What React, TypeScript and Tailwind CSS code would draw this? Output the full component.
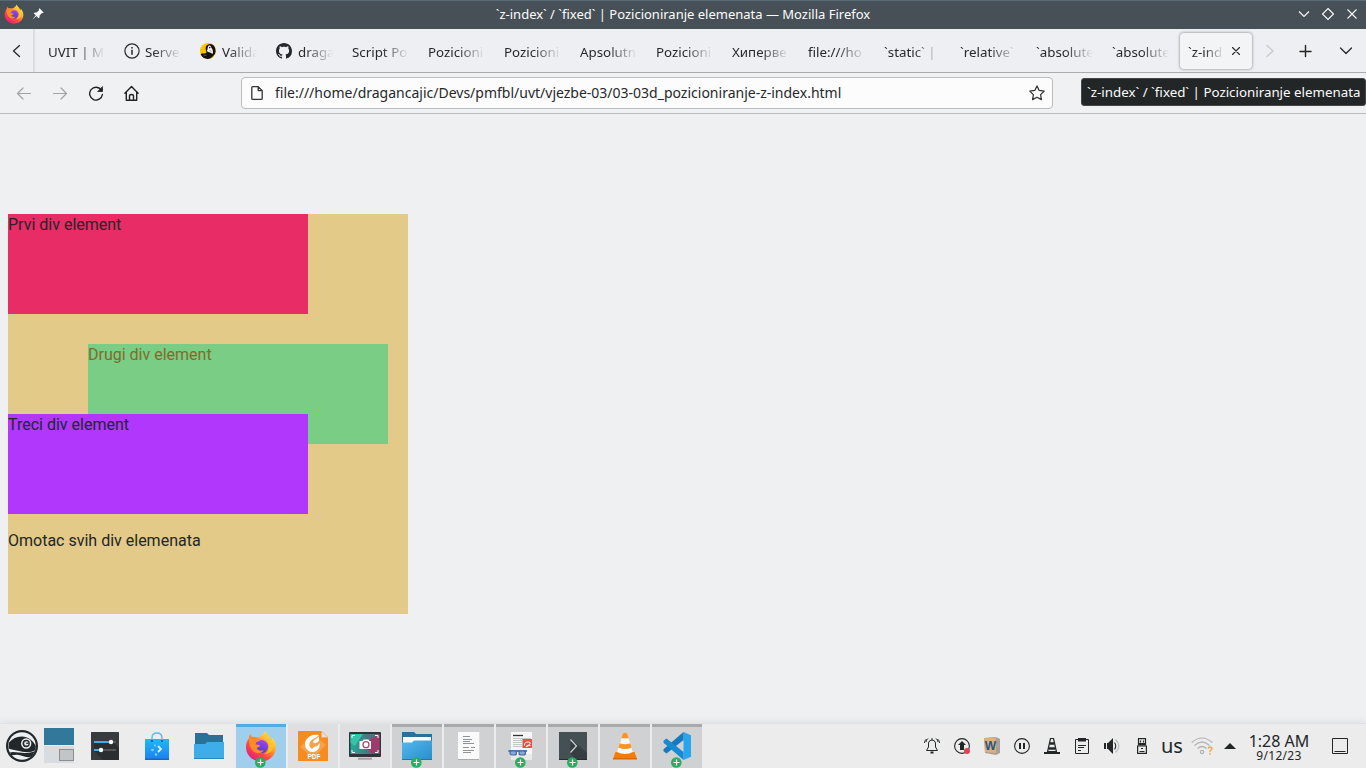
import React from "react";

type Tab = { title: string; icon?: "info" | "validator" | "github" };

const tabs: Tab[] = [
  { title: "UVIT | M" },
  { title: "Serve", icon: "info" },
  { title: "Valida", icon: "validator" },
  { title: "draga", icon: "github" },
  { title: "Script Po" },
  { title: "Pozicioni" },
  { title: "Pozicioni" },
  { title: "Apsolutn" },
  { title: "Pozicioni" },
  { title: "Хиперве" },
  { title: "file:///ho" },
  { title: "`static` |" },
  { title: "`relative`" },
  { title: "`absolute" },
  { title: "`absolute" },
];

function FirefoxLogo({ size }: { size: number }) {
  return (
    <svg width={size} height={size} viewBox="0 0 32 32" className="shrink-0">
      <defs>
        <linearGradient id="ffBody" x1="0.85" y1="0.1" x2="0.2" y2="0.95">
          <stop offset="0" stopColor="#fff04a" />
          <stop offset="0.35" stopColor="#ffa42a" />
          <stop offset="0.65" stopColor="#ff4c43" />
          <stop offset="1" stopColor="#e31b7c" />
        </linearGradient>
        <linearGradient id="ffGlobe" x1="0.7" y1="0" x2="0.3" y2="1">
          <stop offset="0" stopColor="#a145f7" />
          <stop offset="1" stopColor="#4a3cc0" />
        </linearGradient>
      </defs>
      <path
        d="M20.500 0.800C21 3.500 23.200 5 25 7.500c.8 1.100 1 2 1.300 2.900.8-.9.900-2 .700-2.800 2.700 3 4.200 6.500 4 10.400C30.700 25.600 24.200 31.500 16 31.500S1 25.300 1 17.300c0-3.200 1-6.200 2.900-8.700.1-1.800.7-3.300 1.700-4.300.3 1.200.8 2 1.600 2.600 1.500-.4 3-.3 4.300.2 1.700.1 3.200-.2 4.500-1.200 1-1 3.500-2.900 4.500-5.100Z"
        fill="url(#ffBody)"
      />
      <circle cx="16.500" cy="16.500" r="6.600" fill="url(#ffGlobe)" />
      <path
        d="M3.900 9c2.600-1.800 5.600-1.900 8-.6 1.200.6 2.300.6 3.600.5-.5 2-2.700 2.600-4.100 3.300-.7.500-.5 1.700-.6 2.500 1.600-.6 3.300.2 4.600 1.100-1 1.200-2.500 1.300-3.700 2.200 1 2.700 4.500 3.300 7 2.100-1.600 3.300-5.800 4-8.900 2.200C6.200 20.400 3.700 15 3.900 9Z"
        fill="#ff8a29"
      />
      <path
        d="M18.600 7.200c3.400 1.800 5.500 4.800 5.600 8.500.1 4-2 7-5.400 8.700 5.300-.4 9-3.400 9.800-8.100.5-3.500-1-6-3.100-8-1.600-1.500-3.200-3-5-6.200-.8 1.800-1.600 3.500-1.900 5.100Z"
        fill="#ffc72f"
        opacity="0.85"
      />
    </svg>
  );
}

function TabIcon({ kind }: { kind: "info" | "validator" | "github" }) {
  if (kind === "info")
    return (
      <svg width="16" height="16" viewBox="0 0 16 16" className="mr-[5px] shrink-0">
        <circle cx="8" cy="8" r="7.100" fill="none" stroke="#26292c" strokeWidth="1.200" />
        <path d="M8 6.800v5M8 3.900v1.500" stroke="#26292c" strokeWidth="1.500" />
      </svg>
    );
  if (kind === "validator")
    return (
      <svg width="16" height="16" viewBox="0 0 16 16" className="mr-[6px] shrink-0">
        <circle cx="8" cy="8" r="8" fill="#fdc300" />
        <path d="M0.600 11.300C2 10 4 10.700 5.500 10.300 8 9.500 4.500 7 6 3.400 7.500.2 13-.2 14.700 4c1.500 4 .8 6.500-.9 8.300C10.500 17.500 3 17 .6 11.300Z" fill="#111" />
        <path d="M8.400 3c1.700-1.200 3 .3 2.900 1.800 1.600 1.500 2 3.500 1.500 6-1.600-.2-2-1.300-3.800-1.500L6.500 8C8 7.500 7.200 4.400 8.400 3Z" fill="#f5f5f0" />
        <circle cx="9.800" cy="4.600" r=".8" fill="#111" />
        <path d="M3.500 12.200h3M9.800 7l1.800 2" stroke="#777" strokeWidth=".7" />
      </svg>
    );
  return (
    <svg width="16" height="16" viewBox="0 0 16 16" className="mr-[6px] shrink-0" fill="#24292f">
      <path d="M8 0C3.580 0 0 3.580 0 8c0 3.540 2.290 6.530 5.470 7.590.4.070.55-.17.55-.38 0-.19-.01-.82-.01-1.490-2.010.37-2.530-.49-2.690-.94-.09-.23-.48-.94-.82-1.130-.28-.15-.68-.52-.01-.53.63-.01 1.080.58 1.230.82.72 1.210 1.870.87 2.330.66.07-.52.28-.87.51-1.070-1.780-.2-3.640-.89-3.640-3.950 0-.87.31-1.590.82-2.150-.08-.2-.36-1.020.08-2.120 0 0 .67-.21 2.200.82.64-.18 1.320-.27 2-.27s1.360.09 2 .27c1.530-1.040 2.200-.82 2.200-.82.44 1.100.16 1.920.08 2.120.51.56.82 1.270.82 2.150 0 3.070-1.870 3.750-3.650 3.950.29.25.54.73.54 1.480 0 1.070-.01 1.930-.01 2.200 0 .21.15.46.55.38A8.010 8.010 0 0 0 16 8c0-4.420-3.580-8-8-8Z" />
    </svg>
  );
}

function TitleBar() {
  return (
    <header className="flex h-[29px] shrink-0 items-center border-t border-[#586974] bg-[#475057] text-[#fcfcfc]">
      <div className="flex w-[100px] items-center pb-[2px] pl-1">
        <FirefoxLogo size={20} />
        <svg width="12" height="12" viewBox="0 0 12 12" className="ml-[8px] self-center">
          <path d="M7.500 0.300 11.700 4.500 10.600 5.300 10 4.900 7.500 7.400 7.500 9.300 6.500 10.200 4.500 8 .3 11.700 3.800 7.300 1.800 5.400 2.800 4.500 4.700 4.500 7.200 2 6.700 1.300Z" fill="#fcfcfc" />
        </svg>
      </div>
      <h1 className="flex-1 pb-[3px] text-center text-[13px] leading-[24px]">`z-index` / `fixed` | Pozicioniranje elemenata — Mozilla Firefox</h1>
      <div className="flex w-[100px] justify-end gap-2 pb-[2px] pr-1.5">
        <svg width="16" height="16" viewBox="0 0 16 16" fill="none" stroke="#fcfcfc" strokeWidth="1.100"><path d="M3 5.500l5 5 5-5" /></svg>
        <svg width="16" height="16" viewBox="0 0 16 16" fill="none" stroke="#fcfcfc" strokeWidth="1.100"><path d="M8 2.500 13.500 8 8 13.500 2.500 8Z" /></svg>
        <svg width="16" height="16" viewBox="0 0 16 16" fill="none" stroke="#fcfcfc" strokeWidth="1.100"><path d="M3.500 3.500l9 9m0-9l-9 9" /></svg>
      </div>
    </header>
  );
}

function TabStrip() {
  return (
    <div className="flex h-[44px] shrink-0 items-center border-b border-[#a9abad] bg-[#eeeff2] text-[13.330px] text-[#26292c]">
      <div className="flex h-full w-[33px] items-center justify-center">
        <svg width="16" height="16" viewBox="0 0 16 16" fill="none" stroke="#26292c" strokeWidth="1.300" strokeLinecap="round" strokeLinejoin="round"><path d="M10.500 2.500 4.500 8l6 5.500" /></svg>
      </div>
      <div className="h-full w-[5px] bg-linear-to-r from-[#d4d5d8] to-[#eeeff2] to-60%" />
      {tabs.map((t, i) => (
        <div key={i} className="flex w-[76px] shrink-0 items-center pl-[10px] pr-[9px] pt-px">
          {t.icon && <TabIcon kind={t.icon} />}
          <span className="min-w-0 flex-1 overflow-hidden whitespace-nowrap pt-[2px] leading-5 [mask-image:linear-gradient(to_left,transparent,black_28px)]">{t.title}</span>
        </div>
      ))}
      <div className="mx-0.5 flex h-[36px] w-[72px] shrink-0 items-center rounded-[4px] bg-[#f3f4f6] pl-2 pr-2 shadow-[0_0_3px_rgba(0,0,0,0.5)]">
        <span className="w-[36px] overflow-hidden whitespace-nowrap pt-[2px] leading-5 [mask-image:linear-gradient(to_left,transparent,black_20px)]">`z-ind</span>
        <svg width="16" height="16" viewBox="0 0 16 16" className="ml-[4px] shrink-0" stroke="#26292c" strokeWidth="1.100" strokeLinecap="round"><path d="M4.500 4.500l7 7m0-7l-7 7" /></svg>
      </div>
      <div className="flex flex-1 items-center pl-[8px]">
        <svg width="16" height="16" viewBox="0 0 16 16" fill="none" stroke="#c8c9cc" strokeWidth="1.300" strokeLinecap="round" strokeLinejoin="round"><path d="M5 2.500 11 8l-6 5.500" /></svg>
        <svg width="16" height="16" viewBox="0 0 16 16" fill="none" stroke="#222" strokeWidth="1.400" strokeLinecap="round" className="ml-[19px]"><path d="M8.500 2.500v11M3 8.500h11" /></svg>
        <svg width="16" height="16" viewBox="0 0 16 16" fill="none" stroke="#26292c" strokeWidth="1.300" strokeLinecap="round" strokeLinejoin="round" className="ml-[25px]"><path d="M2.500 5 8 10.500 13.500 5" /></svg>
      </div>
    </div>
  );
}

function NavBar() {
  return (
    <div className="flex h-[41px] shrink-0 items-center border-b border-[#bcbdc0] bg-[#f0f1f3] text-[#26292c]">
      <div className="flex w-[241px] gap-5 pl-4">
        <svg width="16" height="16" viewBox="0 0 16 16" fill="none" stroke="#a2a3a6" strokeWidth="1.200" strokeLinecap="round" strokeLinejoin="round"><path d="M14.500 8.500H1.500M7 3 1.500 8.500 7 14" /></svg>
        <svg width="16" height="16" viewBox="0 0 16 16" fill="none" stroke="#a2a3a6" strokeWidth="1.200" strokeLinecap="round" strokeLinejoin="round"><path d="M1.500 8.500h13M9 3 14.500 8.500 9 14" /></svg>
        <svg width="16" height="16" viewBox="0 0 16 16" fill="none" stroke="#222" strokeWidth="1.400" strokeLinecap="round"><path d="M13.300 5A6.400 6.400 0 1 0 14.400 9.500" /><path d="M14.500 2v4.500H10Z" fill="#222" strokeWidth=".8" strokeLinejoin="round" /></svg>
        <svg width="16" height="16" viewBox="0 0 16 16" fill="none" stroke="#222" strokeWidth="1.400" strokeLinecap="round" strokeLinejoin="round"><path d="M.9 8.200 7.500 1.500l6.600 6.700M2.300 7v8.200h10.400V7M5.500 15V11Q5.500 9.500 7.500 9.500T9.500 11V15" /></svg>
      </div>
      <div className="flex h-[32px] w-[812px] items-center rounded-[4px] border border-[#babcbe] bg-[#fcfcfc] pl-[7px] pr-[7px]">
        <svg width="16" height="16" viewBox="0 0 16 16" fill="none" stroke="#333" strokeWidth="1.300" strokeLinejoin="round"><path d="M3.800 1.600h5.400l4 4v7.800q0 1-1 1H3.800q-1 0-1-1V2.600q0-1 1-1ZM9.200 1.600v4h4" /></svg>
        <span className="ml-[10px] flex-1 whitespace-nowrap text-[14px] leading-5">file:///home/dragancajic/Devs/pmfbl/uvt/vjezbe-03/03-03d_pozicioniranje-z-index.html</span>
        <svg width="16" height="16" viewBox="0 0 16 16" fill="none" stroke="#333" strokeWidth="1.250" strokeLinejoin="round"><path d="m8 .9 2.200 4.500 5 .7-3.600 3.500.8 5L8 12.300l-4.400 2.300.8-5L.8 6.100l5-.7Z" /></svg>
      </div>
      <div className="-mt-[2px] ml-[28px] flex h-[28px] flex-1 items-center whitespace-nowrap rounded-[3px] border border-[#45484a] bg-[#232627] pl-[5px] pt-[2px] text-[13.330px] text-[#fcfcfc]">`z-index` / `fixed` | Pozicioniranje elemenata</div>
    </div>
  );
}

function Page() {
  return (
    <main className="min-h-0 flex-1 overflow-hidden bg-[#eff0f2] pl-2 pt-[100px] font-[Roboto,sans-serif] text-base leading-[21px] text-[#232627]">
      <div className="h-[400px] w-[400px] bg-[#e3ca88]">
        <div className="h-[100px] w-[300px] bg-[#e72c66]">Prvi div element</div>
        <div className="ml-[80px] mt-[30px] h-[100px] w-[300px] bg-[#7acd85] text-[#7f6c2c]">Drugi div element</div>
        <div className="relative -mt-[30px] h-[100px] w-[300px] bg-[#b137fd]">Treci div element</div>
        <p className="mt-4">Omotac svih div elemenata</p>
      </div>
    </main>
  );
}

function Plus() {
  return (
    <svg width="12" height="12" viewBox="0 0 12 12" className="absolute bottom-0 left-[18px]">
      <circle cx="6.300" cy="6.500" r="5.300" fill="#27ae60" />
      <path d="M6.500 3.500v6M3.500 6.500h6" stroke="#fff" strokeWidth="1.200" />
    </svg>
  );
}

function Folder() {
  return (
    <svg width="30" height="26" viewBox="0 0 30 26">
      <path d="M1 0h12l2 2h14v11H1Z" fill="#2a7197" />
      <path d="M0 11h11l2-2h17v17H0Z" fill="#3daee9" />
      <path d="M0 25h30v1H0Z" fill="#2688bd" />
    </svg>
  );
}

function Launchers() {
  return (
    <div className="flex h-full items-center">
      <svg width="32" height="32" viewBox="0 0 32 32" className="ml-1.5">
        <circle cx="16" cy="16" r="16" fill="#22272a" />
        <circle cx="16" cy="16" r="13.800" fill="#eef0f2" />
        <path d="M3 12.500C6.500 8.500 11 6.300 16 6.500c5.500.2 11 3.500 13.800 9.500l-.3 4c-5 3.200-12 2.200-17.500.8-3.500-.8-6.500-1-9.500-2.300Z" fill="#22272a" />
        <path d="M4 22.500c2.500-1.200 5.500-.3 8.500.1 6 .8 12 .6 16.500-1.600-1 2.500-2.500 4.500-4 5.700-6 1.800-9-2.200-14-2-2 0-4 .3-6 .8Z" fill="#22272a" />
        <circle cx="20.200" cy="13.500" r="4.400" fill="#22272a" stroke="#eef0f2" strokeWidth="1.500" />
        <circle cx="20.400" cy="13.400" r="2.200" fill="#eef0f2" />
        <path d="M20.200 13.300h2.500" stroke="#22272a" strokeWidth="1.300" />
      </svg>
      <div className="ml-1.5 flex w-[30px] flex-col gap-px pb-0.5">
        <div className="h-[17px] bg-[#31789b]" />
        <div className="flex h-[17px] items-end justify-end bg-[#d8dce0] pb-0.5">
          <div className="h-[12px] w-[15px] border border-[#8c8e90] bg-[#c2c4c6]" />
        </div>
      </div>
      <svg width="28" height="28" viewBox="0 0 28 28" className="ml-[17px]">
        <rect width="28" height="28" rx=".5" fill="#383b3e" />
        <path d="M3 11 20 8 28 16v12H12L3 19Z" fill="#2b2e31" />
        <path d="M3 10h17M3 18h7" stroke="#3daee9" strokeWidth="2" />
        <path d="M20 10h5M10 18h15" stroke="#535658" strokeWidth="2" />
        <circle cx="20" cy="10" r="2.200" fill="#fff" /><circle cx="10" cy="18" r="2.200" fill="#fff" />
      </svg>
      <svg width="24" height="28" viewBox="0 0 24 28" className="ml-[26px]">
        <defs><linearGradient id="bag" x2="0" y2="1"><stop stopColor="#1fb9f7" /><stop offset="1" stopColor="#1d80f1" /></linearGradient></defs>
        <path d="M0 7h24v20H0Z" fill="url(#bag)" /><path d="M0 26.500h24V28H0Z" fill="#1668c4" />
        <path d="M7 8V6q0-5 5-5t5 5v2" fill="none" stroke="#54bdec" strokeWidth="1.400" />
        <circle cx="7" cy="9" r="1" fill="#174d82" /><circle cx="17" cy="9" r="1" fill="#174d82" />
        <path d="m13 14 3 3-3 3" fill="none" stroke="#d8f1ff" strokeWidth="1.800" />
        <g fill="#8bd2ff"><circle cx="10" cy="13.500" r="1" /><circle cx="7.500" cy="18" r="1.300" /><circle cx="11" cy="22.500" r="1.200" /></g>
      </svg>
      <div className="ml-[25px]"><Folder /></div>
    </div>
  );
}

function DocumentsFolder() {
  return (
    <svg width="30" height="28" viewBox="0 0 30 28">
      <defs><linearGradient id="fold" x2="1" y2="1"><stop stopColor="#54b8ee" /><stop offset="1" stopColor="#288ecb" /></linearGradient></defs>
      <path d="M0 0h12l2 2h16v10H0Z" fill="#2a7197" />
      <path d="M1 5h28v7H1Z" fill="#fafafa" />
      <path d="M0 10.500h10l2-2h18V28H0Z" fill="url(#fold)" /><path d="M0 27h30v1H0Z" fill="#2577a5" />
    </svg>
  );
}

const okular = (
  <svg width="28" height="28" viewBox="0 0 28 28">
    <path d="M4 0h21v28H4Z" fill="#f7f7f6" />
    <path d="M6 3.500h10" stroke="#333" strokeWidth="1.300" />
    <path d="M6 6.500h18M6 8.500h9M6 10.500h9M6 12.500h9M6 14.500h9" stroke="#c5c6c7" />
    <path d="M15.500 7H25v9h-9.500Z" fill="#ed4d42" />
    <path d="M17.500 13.500q0-4 4-3.500t0 3-2 1.500 4-1" fill="none" stroke="#fff" />
    <path d="M4 22h21v6H4Z" fill="#e9e9e8" />
    <path d="M1.500 19h18.500" stroke="#466ba4" strokeWidth="1.800" />
    <rect x="3" y="19" width="6.500" height="4" rx="2" fill="#8aa9d6" stroke="#466ba4" strokeWidth="1.200" />
    <rect x="12" y="19" width="6.500" height="4" rx="2" fill="#8aa9d6" stroke="#466ba4" strokeWidth="1.200" />
  </svg>
);

const tasks: { icon: React.ReactNode; state: "active" | "idle" | "plain"; plus?: boolean }[] = [
  { icon: <FirefoxLogo size={32} />, state: "active", plus: true },
  {
    state: "plain",
    icon: (
      <svg width="30" height="30" viewBox="0 0 30 30">
        <path d="M0 0h23l7 7v23H0Z" fill="#f68b1f" />
        <path d="M15 3 28 14 15 27 2 16Z" fill="#f9a04a" />
        <path d="M23.500 0v6.500H30Z" fill="#e4e0dc" stroke="#f4a65a" strokeWidth=".8" />
        <path d="M21 4.200C16 2.500 7.200 5.500 7 13c0 5 3.500 8.200 8 8s7.500-4.500 6.500-9c-1.800 3.500-3.500 4-5.500 3.700l-2 2.300c-2.500-1.500-3.300-4.500-2-7 1.700-3.200 5.500-3.500 9-6.800Z" fill="#fff" />
        <path d="M17 8.500q2.500-1 3.500-3.500 1.500 3.500-.5 6-2.500 2-5 .5 0-2 2-3Z" fill="#fff" />
        <text x="16" y="28" textAnchor="middle" fontSize="6.500" fontWeight="700" fontFamily="Liberation Sans" fill="#fff">PDF</text>
      </svg>
    ),
  },
  {
    state: "plain",
    icon: (
      <svg width="32" height="28" viewBox="0 0 32 28">
        <defs><linearGradient id="scr" x2="1"><stop stopColor="#21aa98" /><stop offset=".6" stopColor="#4a7781" /><stop offset="1" stopColor="#5a6a80" /></linearGradient></defs>
        <rect width="32" height="25" rx="1" fill="#2e3438" />
        <path d="M1.500 2h29v20h-29Z" fill="url(#scr)" />
        <path d="M1.500 2H14L6 14l-4.500-3Z" fill="#35c4a8" />
        <path d="M30.500 2v20H23L13 12Z" fill="#9b3c6b" />
        <path d="M3 6V3.500h3M26 3.500h3V6M3 18v2.500h3M26 20.500h3V18" fill="none" stroke="#fff" />
        <path d="M10.500 9h3l1-1.500h5L20.500 9h1.500v8H10.500Z" fill="#fff" />
        <circle cx="17" cy="12.700" r="3" fill="#fff" stroke="#a34b70" strokeWidth="1.300" />
        <path d="M9 26.700h14" stroke="#9b9fa2" strokeWidth="2" />
      </svg>
    ),
  },
  { icon: <DocumentsFolder />, state: "idle", plus: true },
  {
    state: "idle",
    icon: (
      <svg width="22" height="28" viewBox="0 0 22 28">
        <path d="M0 0h22v28H0Z" fill="#fafafa" /><path d="M0 27.500h22" stroke="#a9abad" /><path d="M21.500 0v28" stroke="#ddd" />
        <path d="M5 4.500h7M5 7.500h9M5 9.500h7M5 11.500h11M5 15.500h6M13 15.500h4M5 18.500h11M5 20.500h8" stroke="#85888b" strokeWidth=".9" />
      </svg>
    ),
  },
  { icon: okular, state: "idle", plus: true },
  {
    state: "idle",
    plus: true,
    icon: (
      <svg width="28" height="28" viewBox="0 0 28 28">
        <path d="M0 0h28v28H0Z" fill="#455055" /><path d="m12 7 16 14v7H16l-5-8Z" fill="#353d40" />
        <path d="M0 27.500h28" stroke="#272d30" /><path d="m11.500 7.500 6 6.500-6 6.500" fill="none" stroke="#cfd3d5" strokeWidth="1.200" />
      </svg>
    ),
  },
  {
    state: "idle",
    icon: (
      <svg width="24" height="28" viewBox="0 0 24 28">
        <path d="M2.500 20h19L24 27H0Z" fill="#f57c00" /><path d="M0 26h24v1.500H0Z" fill="#dc6700" />
        <path d="M10 1.500q2-1.500 4 0L20 20q-8 4-16 0Z" fill="#ff9419" />
        <path d="m8.400 6.300 7.200 0 1.700 5q-5 2-10.500 0ZM5.500 15.500q6.500 3 13 0L20 20q-8 4-16 0Z" fill="#f7f7f7" />
      </svg>
    ),
  },
  {
    state: "idle",
    plus: true,
    icon: (
      <svg width="28" height="28" viewBox="0 0 28 28">
        <path d="M20.500 0 28 3.300v21.400L20.500 28Z" fill="#29a5ed" />
        <path d="M20.500 0v8L3.500 21.500.5 19.200v-2Z" fill="#1879bf" />
        <path d="M20.500 28v-8L3.500 6.500.5 8.800v2Z" fill="#168bd2" />
      </svg>
    ),
  },
];

const taskStyle = {
  active: "bg-[#9fcfed] border-[#4cafe8]",
  idle: "bg-[#d0d1d3] border-[#a8a9ab]",
  plain: "bg-[#dedfe0] border-[#dedfe0]",
};

function Tray() {
  return (
    <div className="flex items-center gap-[14px] text-[#232627]">
      <svg width="16" height="16" viewBox="0 0 16 16" fill="none" stroke="#232627"><path d="M2.500 12.500h11L11.500 9V5Q11 2 8 2T4.500 5v4ZM8 0v2M2.500 1Q.5 2.500.5 5M13.500 1q2 1.500 2 4M4 .5Q2 2 2 4M12 .5q2 1.500 2 3.500" /><path d="M6.500 14.500h3" strokeWidth="2" /></svg>
      <svg width="16" height="16" viewBox="0 0 16 16"><circle cx="8" cy="8" r="7.400" fill="none" stroke="#232627" strokeWidth="1.100" /><path d="M8 3 12 7H10v5H6V7H4Z" fill="#232627" /><circle cx="13" cy="13" r="3" fill="#da4453" /></svg>
      <svg width="16" height="18" viewBox="0 0 16 18">
        <path d="M0 1 12 0l4 2v14l-4 2L1 16Z" fill="#a89f98" /><path d="M0 1 12 .5V16L1 15Z" fill="#dfae79" />
        <text x="6.500" y="12.800" textAnchor="middle" fontSize="12" fontWeight="700" fontFamily="Liberation Sans" fill="#235887">W</text>
      </svg>
      <svg width="16" height="16" viewBox="0 0 16 16"><circle cx="8" cy="8" r="7.400" fill="none" stroke="#232627" strokeWidth="1.100" /><path d="M6 5v6M10 5v6" stroke="#232627" strokeWidth="2" /></svg>
      <svg width="16" height="16" viewBox="0 0 16 16" fill="none" stroke="#232627"><path d="M3.500 14 6.500.5h3L12.500 14" strokeWidth="1.200" /><path d="M0 15h16" strokeWidth="2" /><path d="M5.700 5.500h4.600M4.700 10.500h6.600" strokeWidth="2.500" /><path d="M3 13.500h10" /></svg>
      <svg width="16" height="16" viewBox="0 0 16 16" fill="none" stroke="#232627"><path d="M1.500 1.500h13v14h-13Z" /><path d="M4 1.500h8" strokeWidth="4" /><path d="M4 7.500h8M4 9.500h6M4 12.500h3" /></svg>
      <svg width="16" height="16" viewBox="0 0 16 16" fill="#232627"><path d="M0 5h2v6H0ZM3 5h1l5-5v16l-5-5H3Z" /><path d="M10.500 4.500Q13 8 10.500 11.500" fill="none" stroke="#232627" strokeWidth="1.100" /><path d="M11.500 1.500q7 6.500 0 13" fill="none" stroke="#b6b8ba" strokeWidth="1.100" /></svg>
      <svg width="16" height="16" viewBox="0 0 16 16" fill="none" stroke="#232627" strokeWidth="1.200"><path d="M4.500.7h7v6h-7ZM6.500 2.500v2M9.500 2.500v2M3.600 8h8.800v7.300H3.600ZM5.500 13.500h5" /><path d="M4.500 6h7" strokeWidth="2" /><path d="M7 10.500h2" strokeWidth="1" /></svg>
      <span className="-ml-[3px] w-[22px] text-[20px] leading-6">us</span>
      <svg width="22" height="18" viewBox="0 0 22 18" className="-ml-[6px]" fill="none" stroke="#b1b3b5" strokeWidth="1.200"><path d="M.7 5.500Q11-3.500 21.300 5.500M3.500 8.500Q11 1.500 18.500 8.500M6.500 11.500q4.500-4 9 0" /><circle cx="11" cy="15" r="1.700" /><path d="M17 11.500q.5-1.500 2-1.500 2 0 2 1.800 0 1.200-2 2.200v1.200M19 16.300v1.400" stroke="#f0a644" strokeWidth="1.300" /></svg>
      <svg width="12" height="6" viewBox="0 0 12 6" className="-ml-[3px]"><path d="M6 0 12 6H0Z" fill="#232627" /></svg>
      <div className="-ml-[2px] w-[62px] whitespace-nowrap text-center">
        <div className="pt-[2px] text-[16px] leading-[16px]">1:28 AM</div>
        <div className="text-[12px] leading-[13px] tracking-[0.300px]">9/12/23</div>
      </div>
      <svg width="16" height="16" viewBox="0 0 16 16" className="ml-[8px]" fill="none" stroke="#232627"><path d="M.5.500h15v15H.5ZM2.500 13.500h11" /></svg>
    </div>
  );
}

function Taskbar() {
  return (
    <footer className="flex h-[45px] shrink-0 items-center border-t border-[#dfe1e3] bg-[#ececed] shadow-[0_0_8px_rgba(0,0,0,0.1)]">
      <div className="h-full w-[236px]"><Launchers /></div>
      <div className="flex h-full gap-0.5">
        {tasks.map((t, i) => (
          <div key={i} className={"relative flex w-[50px] items-center justify-center border-t-[3px] pb-[3px] " + taskStyle[t.state]}>
            {t.icon}
            {t.plus && <Plus />}
          </div>
        ))}
      </div>
      <div className="ml-auto pr-[18px]"><Tray /></div>
    </footer>
  );
}

export default function App() {
  return (
    <div className="flex h-screen w-screen flex-col overflow-hidden bg-[#eff0f2] font-['Noto_Sans',sans-serif]">
      <TitleBar />
      <TabStrip />
      <NavBar />
      <Page />
      <Taskbar />
    </div>
  );
}
